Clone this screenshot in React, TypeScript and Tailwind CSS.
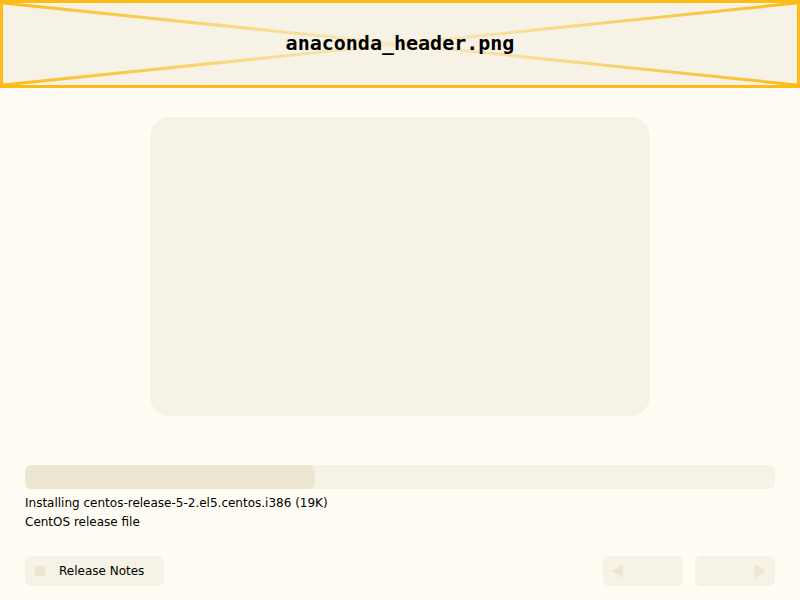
import React from "react";

function HeaderImage() {
  return (
    <div className="relative h-[88px] w-full border-[3px] border-[#fbbc1a] bg-[#f6f2e6]">
      <svg
        className="absolute inset-0 h-full w-full"
        viewBox="0 0 794 82"
        preserveAspectRatio="none"
      >
        <defs>
          <linearGradient id="fade" x1="0" y1="0" x2="1" y2="0">
            <stop offset="0" stopColor="#fbbc1a" stopOpacity="1" />
            <stop offset="0.5" stopColor="#fbbc1a" stopOpacity="0.12" />
            <stop offset="1" stopColor="#fbbc1a" stopOpacity="1" />
          </linearGradient>
        </defs>
        <line x1="0" y1="0" x2="794" y2="82" stroke="url(#fade)" strokeWidth="3" />
        <line x1="0" y1="82" x2="794" y2="0" stroke="url(#fade)" strokeWidth="3" />
      </svg>
      <div className="relative flex h-full items-center justify-center pb-[2px]">
        <span className="font-['DejaVu_Sans_Mono',monospace] text-[20px] font-bold text-black">
          anaconda_header.png
        </span>
      </div>
    </div>
  );
}

export default function App() {
  return (
    <div className="flex h-[600px] w-[800px] flex-col bg-[#fffcf4] font-['DejaVu_Sans',sans-serif] text-[12px] text-black">
      <HeaderImage />

      <div className="flex justify-center pt-[29px]">
        <div className="h-[299px] w-[500px] rounded-[20px] bg-[#f6f2e6]" />
      </div>

      <div className="px-[25px] pt-[49px]">
        <div className="h-[24px] w-full overflow-hidden rounded-[6px] bg-[#f6f2e6]">
          <div className="h-full w-[290px] rounded-[6px] bg-[#ede7d1]" />
        </div>
        <div className="mt-[5px] leading-[19px]">
          <div>Installing centos-release-5-2.el5.centos.i386 (19K)</div>
          <div>CentOS release file</div>
        </div>
      </div>

      <div className="flex items-center justify-between px-[25px] pt-[24px]">
        <button className="flex h-[30px] w-[139px] items-center rounded-[6px] bg-[#f6f2e6] pl-[10px]">
          <span className="h-[10px] w-[10px] bg-[#ede7d1]" />
          <span className="ml-[14px] text-[12px]">Release Notes</span>
        </button>
        <div className="flex gap-[12px]">
          <button className="flex h-[30px] w-[80px] items-center rounded-[6px] bg-[#f6f2e6] pl-[8px]">
            <svg width="12" height="16" viewBox="0 0 12 16">
              <polygon points="12,1 12,15 1,8" fill="#ede7d1" />
            </svg>
          </button>
          <button className="flex h-[30px] w-[80px] items-center justify-end rounded-[6px] bg-[#f6f2e6] pr-[8px]">
            <svg width="12" height="16" viewBox="0 0 12 16">
              <polygon points="0,1 0,15 11,8" fill="#ede7d1" />
            </svg>
          </button>
        </div>
      </div>
    </div>
  );
}
